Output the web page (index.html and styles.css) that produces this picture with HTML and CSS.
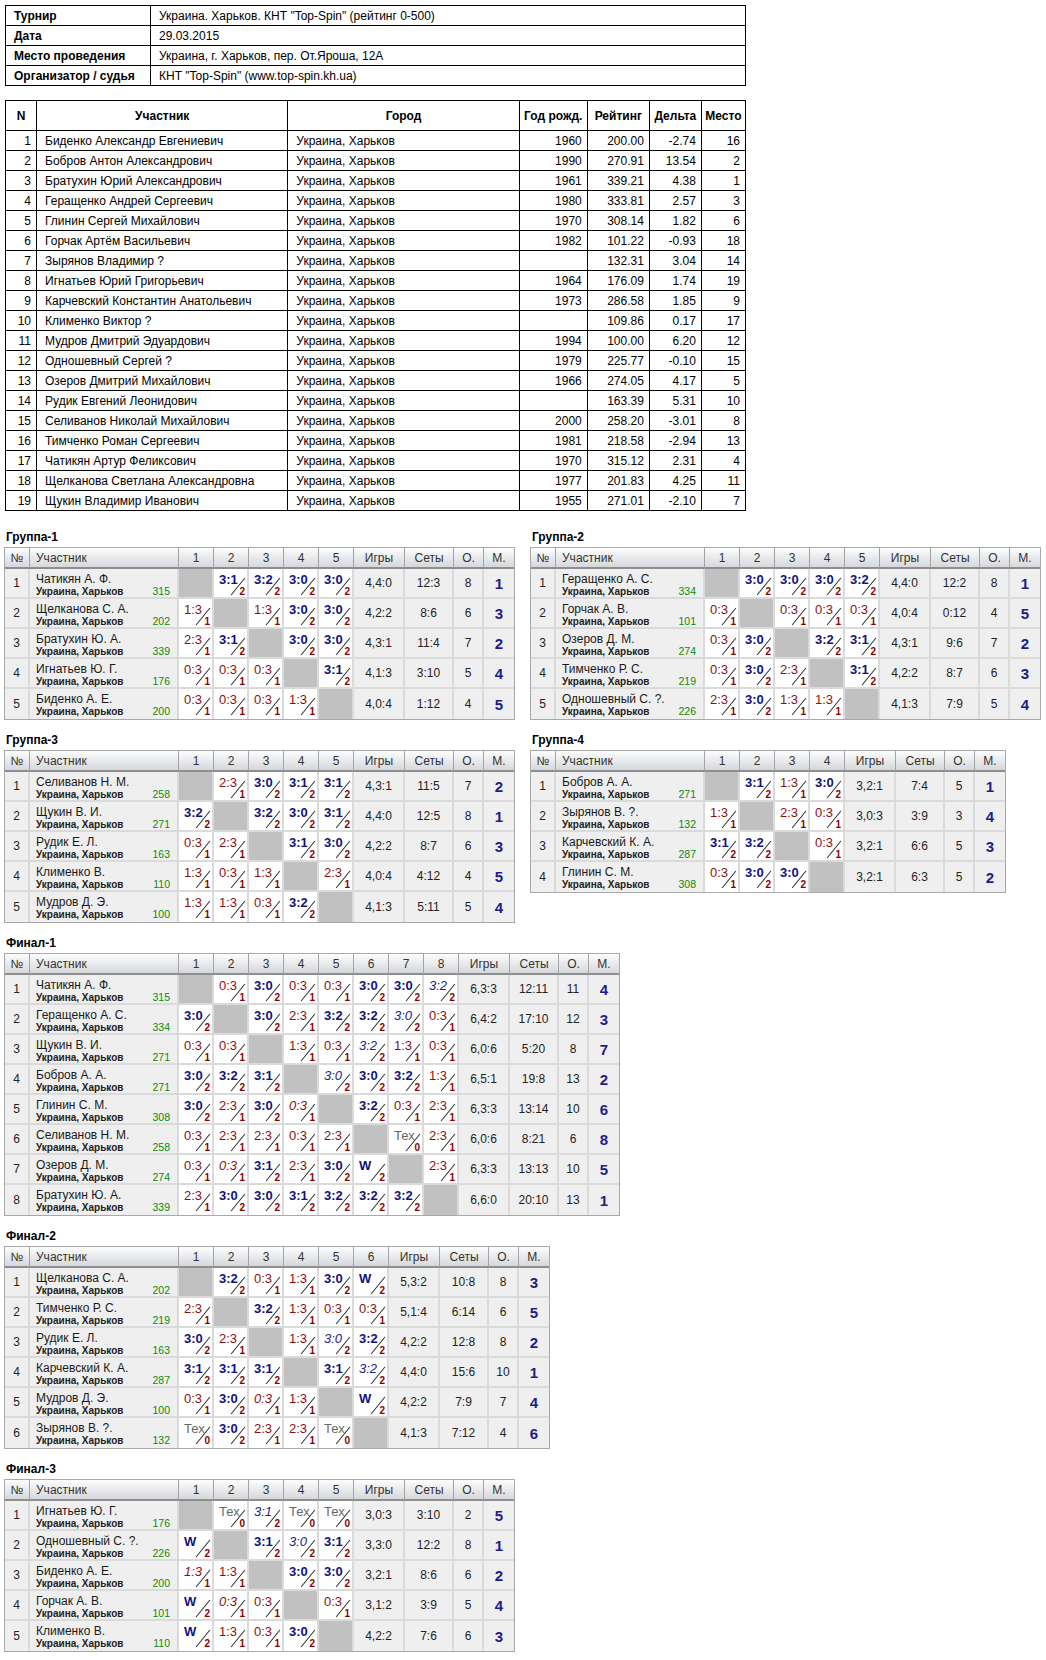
FILE: index.html
```html
<!DOCTYPE html>
<html lang="ru">
<head>
<meta charset="utf-8">
<title>Турнир</title>
<link rel="stylesheet" href="styles.css">
</head>
<body>
<div class="page">
<table class="info">
<tr><td class="k">Турнир</td><td>Украина. Харьков. КНТ "Top-Spin" (рейтинг 0-500)</td></tr>
<tr><td class="k">Дата</td><td>29.03.2015</td></tr>
<tr><td class="k">Место проведения</td><td>Украина, г. Харьков, пер. От.Яроша, 12А</td></tr>
<tr><td class="k">Организатор / судья</td><td>КНТ "Top-Spin" (www.top-spin.kh.ua)</td></tr>
</table>

<table class="plist">
<thead><tr><th class="c-n">N</th><th class="c-p">Участник</th><th class="c-g">Город</th><th class="c-y">Год рожд.</th><th class="c-r">Рейтинг</th><th class="c-d">Дельта</th><th class="c-m">Место</th></tr></thead>
<tbody>
<tr><td class="r">1</td><td>Биденко Александр Евгениевич</td><td>Украина, Харьков</td><td class="r">1960</td><td class="r">200.00</td><td class="r">-2.74</td><td class="r">16</td></tr>
<tr><td class="r">2</td><td>Бобров Антон Александрович</td><td>Украина, Харьков</td><td class="r">1990</td><td class="r">270.91</td><td class="r">13.54</td><td class="r">2</td></tr>
<tr><td class="r">3</td><td>Братухин Юрий Александрович</td><td>Украина, Харьков</td><td class="r">1961</td><td class="r">339.21</td><td class="r">4.38</td><td class="r">1</td></tr>
<tr><td class="r">4</td><td>Геращенко Андрей Сергеевич</td><td>Украина, Харьков</td><td class="r">1980</td><td class="r">333.81</td><td class="r">2.57</td><td class="r">3</td></tr>
<tr><td class="r">5</td><td>Глинин Сергей Михайлович</td><td>Украина, Харьков</td><td class="r">1970</td><td class="r">308.14</td><td class="r">1.82</td><td class="r">6</td></tr>
<tr><td class="r">6</td><td>Горчак Артём Васильевич</td><td>Украина, Харьков</td><td class="r">1982</td><td class="r">101.22</td><td class="r">-0.93</td><td class="r">18</td></tr>
<tr><td class="r">7</td><td>Зырянов Владимир ?</td><td>Украина, Харьков</td><td class="r"></td><td class="r">132.31</td><td class="r">3.04</td><td class="r">14</td></tr>
<tr><td class="r">8</td><td>Игнатьев Юрий Григорьевич</td><td>Украина, Харьков</td><td class="r">1964</td><td class="r">176.09</td><td class="r">1.74</td><td class="r">19</td></tr>
<tr><td class="r">9</td><td>Карчевский Константин Анатольевич</td><td>Украина, Харьков</td><td class="r">1973</td><td class="r">286.58</td><td class="r">1.85</td><td class="r">9</td></tr>
<tr><td class="r">10</td><td>Клименко Виктор ?</td><td>Украина, Харьков</td><td class="r"></td><td class="r">109.86</td><td class="r">0.17</td><td class="r">17</td></tr>
<tr><td class="r">11</td><td>Мудров Дмитрий Эдуардович</td><td>Украина, Харьков</td><td class="r">1994</td><td class="r">100.00</td><td class="r">6.20</td><td class="r">12</td></tr>
<tr><td class="r">12</td><td>Одношевный Сергей ?</td><td>Украина, Харьков</td><td class="r">1979</td><td class="r">225.77</td><td class="r">-0.10</td><td class="r">15</td></tr>
<tr><td class="r">13</td><td>Озеров Дмитрий Михайлович</td><td>Украина, Харьков</td><td class="r">1966</td><td class="r">274.05</td><td class="r">4.17</td><td class="r">5</td></tr>
<tr><td class="r">14</td><td>Рудик Евгений Леонидович</td><td>Украина, Харьков</td><td class="r"></td><td class="r">163.39</td><td class="r">5.31</td><td class="r">10</td></tr>
<tr><td class="r">15</td><td>Селиванов Николай Михайлович</td><td>Украина, Харьков</td><td class="r">2000</td><td class="r">258.20</td><td class="r">-3.01</td><td class="r">8</td></tr>
<tr><td class="r">16</td><td>Тимченко Роман Сергеевич</td><td>Украина, Харьков</td><td class="r">1981</td><td class="r">218.58</td><td class="r">-2.94</td><td class="r">13</td></tr>
<tr><td class="r">17</td><td>Чатикян Артур Феликсович</td><td>Украина, Харьков</td><td class="r">1970</td><td class="r">315.12</td><td class="r">2.31</td><td class="r">4</td></tr>
<tr><td class="r">18</td><td>Щелканова Светлана Александровна</td><td>Украина, Харьков</td><td class="r">1977</td><td class="r">201.83</td><td class="r">4.25</td><td class="r">11</td></tr>
<tr><td class="r">19</td><td>Щукин Владимир Иванович</td><td>Украина, Харьков</td><td class="r">1955</td><td class="r">271.01</td><td class="r">-2.10</td><td class="r">7</td></tr>
</tbody>
</table>

<div class="row first">
<div class="blk">
<div class="ttl">Группа-1</div>
<table class="g g5">
<thead><tr><th class="h-no">№</th><th class="h-nm">Участник</th><th class="h-sc">1</th><th class="h-sc">2</th><th class="h-sc">3</th><th class="h-sc">4</th><th class="h-sc">5</th><th class="h-ig">Игры</th><th class="h-st">Сеты</th><th class="h-o">О.</th><th class="h-m">М.</th></tr></thead>
<tbody>
<tr><td>1</td><td class="nm">Чатикян А. Ф.<span class="cty">Украина, Харьков<em>315</em></span></td><td class="x"></td><td class="w">3:1<b>2</b></td><td class="w">3:2<b>2</b></td><td class="w">3:0<b>2</b></td><td class="w">3:0<b>2</b></td><td>4,4:0</td><td>12:3</td><td>8</td><td class="pl">1</td></tr>
<tr><td>2</td><td class="nm">Щелканова С. А.<span class="cty">Украина, Харьков<em>202</em></span></td><td class="l">1:3<b>1</b></td><td class="x"></td><td class="l">1:3<b>1</b></td><td class="w">3:0<b>2</b></td><td class="w">3:0<b>2</b></td><td>4,2:2</td><td>8:6</td><td>6</td><td class="pl">3</td></tr>
<tr><td>3</td><td class="nm">Братухин Ю. А.<span class="cty">Украина, Харьков<em>339</em></span></td><td class="l">2:3<b>1</b></td><td class="w">3:1<b>2</b></td><td class="x"></td><td class="w">3:0<b>2</b></td><td class="w">3:0<b>2</b></td><td>4,3:1</td><td>11:4</td><td>7</td><td class="pl">2</td></tr>
<tr><td>4</td><td class="nm">Игнатьев Ю. Г.<span class="cty">Украина, Харьков<em>176</em></span></td><td class="l">0:3<b>1</b></td><td class="l">0:3<b>1</b></td><td class="l">0:3<b>1</b></td><td class="x"></td><td class="w">3:1<b>2</b></td><td>4,1:3</td><td>3:10</td><td>5</td><td class="pl">4</td></tr>
<tr><td>5</td><td class="nm">Биденко А. Е.<span class="cty">Украина, Харьков<em>200</em></span></td><td class="l">0:3<b>1</b></td><td class="l">0:3<b>1</b></td><td class="l">0:3<b>1</b></td><td class="l">1:3<b>1</b></td><td class="x"></td><td>4,0:4</td><td>1:12</td><td>4</td><td class="pl">5</td></tr>
</tbody>
</table>
</div>
<div class="blk">
<div class="ttl">Группа-2</div>
<table class="g g5">
<thead><tr><th class="h-no">№</th><th class="h-nm">Участник</th><th class="h-sc">1</th><th class="h-sc">2</th><th class="h-sc">3</th><th class="h-sc">4</th><th class="h-sc">5</th><th class="h-ig">Игры</th><th class="h-st">Сеты</th><th class="h-o">О.</th><th class="h-m">М.</th></tr></thead>
<tbody>
<tr><td>1</td><td class="nm">Геращенко А. С.<span class="cty">Украина, Харьков<em>334</em></span></td><td class="x"></td><td class="w">3:0<b>2</b></td><td class="w">3:0<b>2</b></td><td class="w">3:0<b>2</b></td><td class="w">3:2<b>2</b></td><td>4,4:0</td><td>12:2</td><td>8</td><td class="pl">1</td></tr>
<tr><td>2</td><td class="nm">Горчак А. В.<span class="cty">Украина, Харьков<em>101</em></span></td><td class="l">0:3<b>1</b></td><td class="x"></td><td class="l">0:3<b>1</b></td><td class="l">0:3<b>1</b></td><td class="l">0:3<b>1</b></td><td>4,0:4</td><td>0:12</td><td>4</td><td class="pl">5</td></tr>
<tr><td>3</td><td class="nm">Озеров Д. М.<span class="cty">Украина, Харьков<em>274</em></span></td><td class="l">0:3<b>1</b></td><td class="w">3:0<b>2</b></td><td class="x"></td><td class="w">3:2<b>2</b></td><td class="w">3:1<b>2</b></td><td>4,3:1</td><td>9:6</td><td>7</td><td class="pl">2</td></tr>
<tr><td>4</td><td class="nm">Тимченко Р. С.<span class="cty">Украина, Харьков<em>219</em></span></td><td class="l">0:3<b>1</b></td><td class="w">3:0<b>2</b></td><td class="l">2:3<b>1</b></td><td class="x"></td><td class="w">3:1<b>2</b></td><td>4,2:2</td><td>8:7</td><td>6</td><td class="pl">3</td></tr>
<tr><td>5</td><td class="nm">Одношевный С. ?.<span class="cty">Украина, Харьков<em>226</em></span></td><td class="l">2:3<b>1</b></td><td class="w">3:0<b>2</b></td><td class="l">1:3<b>1</b></td><td class="l">1:3<b>1</b></td><td class="x"></td><td>4,1:3</td><td>7:9</td><td>5</td><td class="pl">4</td></tr>
</tbody>
</table>
</div>
</div>

<div class="row">
<div class="blk">
<div class="ttl">Группа-3</div>
<table class="g g5">
<thead><tr><th class="h-no">№</th><th class="h-nm">Участник</th><th class="h-sc">1</th><th class="h-sc">2</th><th class="h-sc">3</th><th class="h-sc">4</th><th class="h-sc">5</th><th class="h-ig">Игры</th><th class="h-st">Сеты</th><th class="h-o">О.</th><th class="h-m">М.</th></tr></thead>
<tbody>
<tr><td>1</td><td class="nm">Селиванов Н. М.<span class="cty">Украина, Харьков<em>258</em></span></td><td class="x"></td><td class="l">2:3<b>1</b></td><td class="w">3:0<b>2</b></td><td class="w">3:1<b>2</b></td><td class="w">3:1<b>2</b></td><td>4,3:1</td><td>11:5</td><td>7</td><td class="pl">2</td></tr>
<tr><td>2</td><td class="nm">Щукин В. И.<span class="cty">Украина, Харьков<em>271</em></span></td><td class="w">3:2<b>2</b></td><td class="x"></td><td class="w">3:2<b>2</b></td><td class="w">3:0<b>2</b></td><td class="w">3:1<b>2</b></td><td>4,4:0</td><td>12:5</td><td>8</td><td class="pl">1</td></tr>
<tr><td>3</td><td class="nm">Рудик Е. Л.<span class="cty">Украина, Харьков<em>163</em></span></td><td class="l">0:3<b>1</b></td><td class="l">2:3<b>1</b></td><td class="x"></td><td class="w">3:1<b>2</b></td><td class="w">3:0<b>2</b></td><td>4,2:2</td><td>8:7</td><td>6</td><td class="pl">3</td></tr>
<tr><td>4</td><td class="nm">Клименко В.<span class="cty">Украина, Харьков<em>110</em></span></td><td class="l">1:3<b>1</b></td><td class="l">0:3<b>1</b></td><td class="l">1:3<b>1</b></td><td class="x"></td><td class="l">2:3<b>1</b></td><td>4,0:4</td><td>4:12</td><td>4</td><td class="pl">5</td></tr>
<tr><td>5</td><td class="nm">Мудров Д. Э.<span class="cty">Украина, Харьков<em>100</em></span></td><td class="l">1:3<b>1</b></td><td class="l">1:3<b>1</b></td><td class="l">0:3<b>1</b></td><td class="w">3:2<b>2</b></td><td class="x"></td><td>4,1:3</td><td>5:11</td><td>5</td><td class="pl">4</td></tr>
</tbody>
</table>
</div>
<div class="blk">
<div class="ttl">Группа-4</div>
<table class="g g4">
<thead><tr><th class="h-no">№</th><th class="h-nm">Участник</th><th class="h-sc">1</th><th class="h-sc">2</th><th class="h-sc">3</th><th class="h-sc">4</th><th class="h-ig">Игры</th><th class="h-st">Сеты</th><th class="h-o">О.</th><th class="h-m">М.</th></tr></thead>
<tbody>
<tr><td>1</td><td class="nm">Бобров А. А.<span class="cty">Украина, Харьков<em>271</em></span></td><td class="x"></td><td class="w">3:1<b>2</b></td><td class="l">1:3<b>1</b></td><td class="w">3:0<b>2</b></td><td>3,2:1</td><td>7:4</td><td>5</td><td class="pl">1</td></tr>
<tr><td>2</td><td class="nm">Зырянов В. ?.<span class="cty">Украина, Харьков<em>132</em></span></td><td class="l">1:3<b>1</b></td><td class="x"></td><td class="l">2:3<b>1</b></td><td class="l">0:3<b>1</b></td><td>3,0:3</td><td>3:9</td><td>3</td><td class="pl">4</td></tr>
<tr><td>3</td><td class="nm">Карчевский К. А.<span class="cty">Украина, Харьков<em>287</em></span></td><td class="w">3:1<b>2</b></td><td class="w">3:2<b>2</b></td><td class="x"></td><td class="l">0:3<b>1</b></td><td>3,2:1</td><td>6:6</td><td>5</td><td class="pl">3</td></tr>
<tr><td>4</td><td class="nm">Глинин С. М.<span class="cty">Украина, Харьков<em>308</em></span></td><td class="l">0:3<b>1</b></td><td class="w">3:0<b>2</b></td><td class="w">3:0<b>2</b></td><td class="x"></td><td>3,2:1</td><td>6:3</td><td>5</td><td class="pl">2</td></tr>
</tbody>
</table>
</div>
</div>

<div class="blk solo">
<div class="ttl">Финал-1</div>
<table class="g g8">
<thead><tr><th class="h-no">№</th><th class="h-nm">Участник</th><th class="h-sc">1</th><th class="h-sc">2</th><th class="h-sc">3</th><th class="h-sc">4</th><th class="h-sc">5</th><th class="h-sc">6</th><th class="h-sc">7</th><th class="h-sc">8</th><th class="h-ig">Игры</th><th class="h-st">Сеты</th><th class="h-o">О.</th><th class="h-m">М.</th></tr></thead>
<tbody>
<tr><td>1</td><td class="nm">Чатикян А. Ф.<span class="cty">Украина, Харьков<em>315</em></span></td><td class="x"></td><td class="l">0:3<b>1</b></td><td class="w">3:0<b>2</b></td><td class="l">0:3<b>1</b></td><td class="l">0:3<b>1</b></td><td class="w">3:0<b>2</b></td><td class="w">3:0<b>2</b></td><td class="wi">3:2<b>2</b></td><td>6,3:3</td><td>12:11</td><td>11</td><td class="pl">4</td></tr>
<tr><td>2</td><td class="nm">Геращенко А. С.<span class="cty">Украина, Харьков<em>334</em></span></td><td class="w">3:0<b>2</b></td><td class="x"></td><td class="w">3:0<b>2</b></td><td class="l">2:3<b>1</b></td><td class="w">3:2<b>2</b></td><td class="w">3:2<b>2</b></td><td class="wi">3:0<b>2</b></td><td class="l">0:3<b>1</b></td><td>6,4:2</td><td>17:10</td><td>12</td><td class="pl">3</td></tr>
<tr><td>3</td><td class="nm">Щукин В. И.<span class="cty">Украина, Харьков<em>271</em></span></td><td class="l">0:3<b>1</b></td><td class="l">0:3<b>1</b></td><td class="x"></td><td class="l">1:3<b>1</b></td><td class="l">0:3<b>1</b></td><td class="wi">3:2<b>2</b></td><td class="l">1:3<b>1</b></td><td class="l">0:3<b>1</b></td><td>6,0:6</td><td>5:20</td><td>8</td><td class="pl">7</td></tr>
<tr><td>4</td><td class="nm">Бобров А. А.<span class="cty">Украина, Харьков<em>271</em></span></td><td class="w">3:0<b>2</b></td><td class="w">3:2<b>2</b></td><td class="w">3:1<b>2</b></td><td class="x"></td><td class="wi">3:0<b>2</b></td><td class="w">3:0<b>2</b></td><td class="w">3:2<b>2</b></td><td class="l">1:3<b>1</b></td><td>6,5:1</td><td>19:8</td><td>13</td><td class="pl">2</td></tr>
<tr><td>5</td><td class="nm">Глинин С. М.<span class="cty">Украина, Харьков<em>308</em></span></td><td class="w">3:0<b>2</b></td><td class="l">2:3<b>1</b></td><td class="w">3:0<b>2</b></td><td class="li">0:3<b>1</b></td><td class="x"></td><td class="w">3:2<b>2</b></td><td class="l">0:3<b>1</b></td><td class="l">2:3<b>1</b></td><td>6,3:3</td><td>13:14</td><td>10</td><td class="pl">6</td></tr>
<tr><td>6</td><td class="nm">Селиванов Н. М.<span class="cty">Украина, Харьков<em>258</em></span></td><td class="l">0:3<b>1</b></td><td class="l">2:3<b>1</b></td><td class="l">2:3<b>1</b></td><td class="l">0:3<b>1</b></td><td class="l">2:3<b>1</b></td><td class="x"></td><td class="t">Тех<b>0</b></td><td class="l">2:3<b>1</b></td><td>6,0:6</td><td>8:21</td><td>6</td><td class="pl">8</td></tr>
<tr><td>7</td><td class="nm">Озеров Д. М.<span class="cty">Украина, Харьков<em>274</em></span></td><td class="l">0:3<b>1</b></td><td class="li">0:3<b>1</b></td><td class="w">3:1<b>2</b></td><td class="l">2:3<b>1</b></td><td class="w">3:0<b>2</b></td><td class="w">W<b>2</b></td><td class="x"></td><td class="l">2:3<b>1</b></td><td>6,3:3</td><td>13:13</td><td>10</td><td class="pl">5</td></tr>
<tr><td>8</td><td class="nm">Братухин Ю. А.<span class="cty">Украина, Харьков<em>339</em></span></td><td class="l">2:3<b>1</b></td><td class="w">3:0<b>2</b></td><td class="w">3:0<b>2</b></td><td class="w">3:1<b>2</b></td><td class="w">3:2<b>2</b></td><td class="w">3:2<b>2</b></td><td class="w">3:2<b>2</b></td><td class="x"></td><td>6,6:0</td><td>20:10</td><td>13</td><td class="pl">1</td></tr>
</tbody>
</table>
</div>

<div class="blk solo">
<div class="ttl">Финал-2</div>
<table class="g g6">
<thead><tr><th class="h-no">№</th><th class="h-nm">Участник</th><th class="h-sc">1</th><th class="h-sc">2</th><th class="h-sc">3</th><th class="h-sc">4</th><th class="h-sc">5</th><th class="h-sc">6</th><th class="h-ig">Игры</th><th class="h-st">Сеты</th><th class="h-o">О.</th><th class="h-m">М.</th></tr></thead>
<tbody>
<tr><td>1</td><td class="nm">Щелканова С. А.<span class="cty">Украина, Харьков<em>202</em></span></td><td class="x"></td><td class="w">3:2<b>2</b></td><td class="l">0:3<b>1</b></td><td class="l">1:3<b>1</b></td><td class="w">3:0<b>2</b></td><td class="w">W<b>2</b></td><td>5,3:2</td><td>10:8</td><td>8</td><td class="pl">3</td></tr>
<tr><td>2</td><td class="nm">Тимченко Р. С.<span class="cty">Украина, Харьков<em>219</em></span></td><td class="l">2:3<b>1</b></td><td class="x"></td><td class="w">3:2<b>2</b></td><td class="l">1:3<b>1</b></td><td class="l">0:3<b>1</b></td><td class="l">0:3<b>1</b></td><td>5,1:4</td><td>6:14</td><td>6</td><td class="pl">5</td></tr>
<tr><td>3</td><td class="nm">Рудик Е. Л.<span class="cty">Украина, Харьков<em>163</em></span></td><td class="w">3:0<b>2</b></td><td class="l">2:3<b>1</b></td><td class="x"></td><td class="l">1:3<b>1</b></td><td class="wi">3:0<b>2</b></td><td class="w">3:2<b>2</b></td><td>4,2:2</td><td>12:8</td><td>8</td><td class="pl">2</td></tr>
<tr><td>4</td><td class="nm">Карчевский К. А.<span class="cty">Украина, Харьков<em>287</em></span></td><td class="w">3:1<b>2</b></td><td class="w">3:1<b>2</b></td><td class="w">3:1<b>2</b></td><td class="x"></td><td class="w">3:1<b>2</b></td><td class="wi">3:2<b>2</b></td><td>4,4:0</td><td>15:6</td><td>10</td><td class="pl">1</td></tr>
<tr><td>5</td><td class="nm">Мудров Д. Э.<span class="cty">Украина, Харьков<em>100</em></span></td><td class="l">0:3<b>1</b></td><td class="w">3:0<b>2</b></td><td class="li">0:3<b>1</b></td><td class="l">1:3<b>1</b></td><td class="x"></td><td class="w">W<b>2</b></td><td>4,2:2</td><td>7:9</td><td>7</td><td class="pl">4</td></tr>
<tr><td>6</td><td class="nm">Зырянов В. ?.<span class="cty">Украина, Харьков<em>132</em></span></td><td class="t">Тех<b>0</b></td><td class="w">3:0<b>2</b></td><td class="l">2:3<b>1</b></td><td class="l">2:3<b>1</b></td><td class="t">Тех<b>0</b></td><td class="x"></td><td>4,1:3</td><td>7:12</td><td>4</td><td class="pl">6</td></tr>
</tbody>
</table>
</div>

<div class="blk solo">
<div class="ttl">Финал-3</div>
<table class="g g5">
<thead><tr><th class="h-no">№</th><th class="h-nm">Участник</th><th class="h-sc">1</th><th class="h-sc">2</th><th class="h-sc">3</th><th class="h-sc">4</th><th class="h-sc">5</th><th class="h-ig">Игры</th><th class="h-st">Сеты</th><th class="h-o">О.</th><th class="h-m">М.</th></tr></thead>
<tbody>
<tr><td>1</td><td class="nm">Игнатьев Ю. Г.<span class="cty">Украина, Харьков<em>176</em></span></td><td class="x"></td><td class="t">Тех<b>0</b></td><td class="wi">3:1<b>2</b></td><td class="t">Тех<b>0</b></td><td class="t">Тех<b>0</b></td><td>3,0:3</td><td>3:10</td><td>2</td><td class="pl">5</td></tr>
<tr><td>2</td><td class="nm">Одношевный С. ?.<span class="cty">Украина, Харьков<em>226</em></span></td><td class="w">W<b>2</b></td><td class="x"></td><td class="w">3:1<b>2</b></td><td class="wi">3:0<b>2</b></td><td class="w">3:1<b>2</b></td><td>3,3:0</td><td>12:2</td><td>8</td><td class="pl">1</td></tr>
<tr><td>3</td><td class="nm">Биденко А. Е.<span class="cty">Украина, Харьков<em>200</em></span></td><td class="li">1:3<b>1</b></td><td class="l">1:3<b>1</b></td><td class="x"></td><td class="w">3:0<b>2</b></td><td class="w">3:0<b>2</b></td><td>3,2:1</td><td>8:6</td><td>6</td><td class="pl">2</td></tr>
<tr><td>4</td><td class="nm">Горчак А. В.<span class="cty">Украина, Харьков<em>101</em></span></td><td class="w">W<b>2</b></td><td class="li">0:3<b>1</b></td><td class="l">0:3<b>1</b></td><td class="x"></td><td class="l">0:3<b>1</b></td><td>3,1:2</td><td>3:9</td><td>5</td><td class="pl">4</td></tr>
<tr><td>5</td><td class="nm">Клименко В.<span class="cty">Украина, Харьков<em>110</em></span></td><td class="w">W<b>2</b></td><td class="l">1:3<b>1</b></td><td class="l">0:3<b>1</b></td><td class="w">3:0<b>2</b></td><td class="x"></td><td>4,2:2</td><td>7:6</td><td>6</td><td class="pl">3</td></tr>
</tbody>
</table>
</div>
</div>
</body>
</html>
```
FILE: styles.css
```css
* { box-sizing: border-box; }
body {
  margin: 0;
  background: #fff;
  color: #000;
  font-family: "Liberation Sans", Arial, Helvetica, sans-serif;
}
.page { padding: 5px 0 6px 4px; }

/* Tournament info */
.info {
  border-collapse: collapse;
  width: 741px;
  margin-left: 1px;
  font-size: 12px;
}
.info td {
  border: 1px solid #000;
  height: 20px;
  padding: 0 8px;
  line-height: 18px;
  white-space: nowrap;
}
.info td.k { width: 145px; font-weight: bold; }

/* Participant list */
.plist {
  border-collapse: collapse;
  table-layout: fixed;
  width: 741px;
  margin: 14px 0 0 1px;
  font-size: 12px;
}
.plist th {
  border: 1px solid #000;
  height: 30px;
  font-weight: bold;
  text-align: center;
  padding: 0 2px;
  white-space: nowrap;
}
.plist td {
  border: 1px solid #000;
  height: 20px;
  padding: 0 8px;
  line-height: 18px;
  white-space: nowrap;
}
.plist td.r { text-align: right; padding: 0 5px; }
.c-n { width: 31px; }
.c-p { width: 251px; }
.c-g { width: 231px; }
.c-y { width: 68px; }
.c-r { width: 62px; }
.c-d { width: 52px; }
.c-m { width: 44px; }

/* Blocks */
.row { display: flex; gap: 15px; align-items: flex-start; margin-top: 8px; }
.row.first { margin-top: 14px; }
.blk.solo { margin-top: 8px; }
.ttl {
  height: 22px;
  padding: 5px 0 3px 2px;
  font-size: 12px;
  line-height: 14px;
  font-weight: bold;
  color: #000;
}

/* Result grids */
.g {
  border-collapse: separate;
  border-spacing: 0;
  table-layout: fixed;
  border: 1px solid #a9a9a9;
  font-size: 12px;
  color: #222;
}
.g5 { width: 511px; }
.g4 { width: 476px; }
.g6 { width: 546px; }
.g8 { width: 616px; }
.g th {
  height: 21px;
  padding: 0;
  font-weight: normal;
  color: #333;
  text-align: center;
  line-height: 18px;
  background: linear-gradient(#fdfdfd, #d5d7dc);
  border-right: 1px solid #a3a3a3;
  border-bottom: 2px solid #8e8e8e;
  white-space: nowrap;
}
.g th:last-child { border-right: 0; }
.g th.h-nm { text-align: left; padding-left: 6px; }
.h-no { width: 25px; }
.h-nm { width: 149px; }
.h-sc { width: 35px; }
.h-ig { width: 51px; }
.h-st { width: 49px; }
.h-o { width: 30px; }
.h-m { width: 30px; }

.g td {
  height: 30px;
  padding: 0;
  background: #efefef;
  text-align: center;
  vertical-align: middle;
  border-right: 2px solid #dadada;
  border-bottom: 2px solid #dadada;
  white-space: nowrap;
}
.g td:last-child { border-right: 0; }
.g tbody tr:last-child td { border-bottom: 0; }

.g td.nm {
  text-align: left;
  vertical-align: top;
  padding: 3px 7px 0 6px;
  line-height: 14px;
  color: #1a1a1a;
}
.cty {
  display: flex;
  justify-content: space-between;
  align-items: baseline;
  font-size: 10px;
  line-height: 11px;
  font-weight: bold;
  color: #222;
}
.cty em {
  font-style: normal;
  font-weight: normal;
  font-size: 10.5px;
  color: #0b8a0b;
}
.g td.pl {
  font-size: 15px;
  font-weight: bold;
  color: #1c1c8e;
}

/* Score cells */
.g td.w, .g td.l, .g td.wi, .g td.li, .g td.t {
  position: relative;
  background: #fff;
  text-align: left;
  vertical-align: top;
  padding: 4px 0 0 5px;
  font-size: 13px;
  line-height: 14px;
}
.g td.w::after, .g td.l::after, .g td.wi::after, .g td.li::after, .g td.t::after {
  content: "";
  position: absolute;
  left: 13px;
  top: 17px;
  width: 22px;
  height: 1px;
  background: #2b2b2b;
  transform: rotate(-51deg);
}
.g td.w { font-weight: bold; color: #12127e; }
.g td.l { color: #8a1010; }
.g td.wi { font-style: italic; color: #23238f; }
.g td.li { font-style: italic; color: #8a1010; }
.g td.t { color: #666; }
.g td b {
  display: block;
  text-align: right;
  padding-right: 2px;
  font-size: 10px;
  line-height: 10px;
  font-weight: bold;
  font-style: normal;
  color: #8b0000;
}
.g td.x { background: #c1c1c1; }
```
